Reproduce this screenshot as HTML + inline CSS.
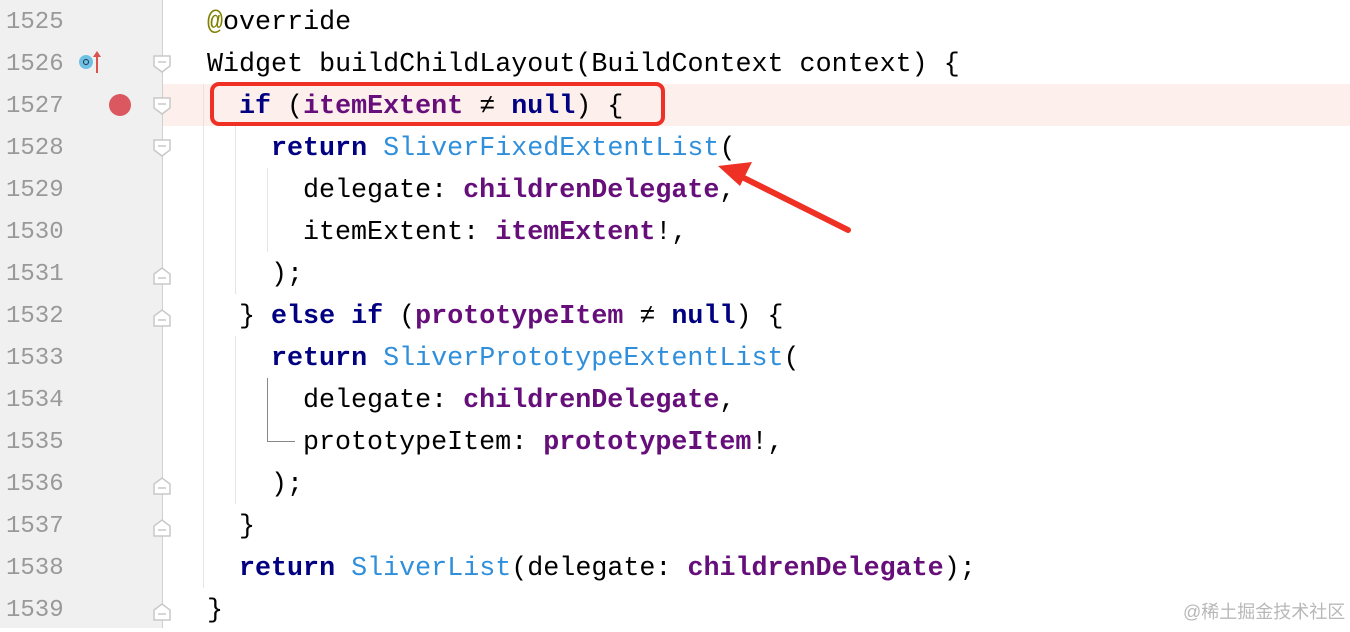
<!DOCTYPE html><html><head><style>
body{margin:0;width:1350px;height:628px;overflow:hidden;background:#fff;position:relative;font-family:"Liberation Mono",monospace}
.g{position:absolute;left:0;top:0;width:162px;height:628px;background:#f0f0f0}
.gl{position:absolute;left:162px;top:0;width:1px;height:628px;background:#d0d0d0}
.hl{position:absolute;left:163px;top:84px;width:1187px;height:42px;background:#fcefec}
.ln{position:absolute;left:6px;font-size:24px;color:#999;line-height:42px;margin-top:2px}
.c{position:absolute;font-size:26.7px;line-height:42px;white-space:pre;color:#000;margin-top:2px}
.k{color:#000080;font-weight:bold}.t{color:#2f8fdb}.f{color:#660e7a;font-weight:bold}.a{color:#808000}
.ig{position:absolute;width:1px;background:#e4e4e4}
</style></head><body>
<div class="g"></div><div class="gl"></div><div class="hl"></div>
<div class="ig" style="left:203px;top:84px;height:504px"></div>
<div class="ig" style="left:235px;top:126px;height:168px"></div>
<div class="ig" style="left:235px;top:336px;height:168px"></div>
<div class="ig" style="left:267px;top:168px;height:84px"></div>
<div style="position:absolute;left:267px;top:378px;width:1px;height:63px;background:#888"></div>
<div style="position:absolute;left:267px;top:441px;width:28px;height:1px;background:#888"></div>
<div class="ln" style="top:0">1525</div><div class="ln" style="top:42px">1526</div><div class="ln" style="top:84px">1527</div><div class="ln" style="top:126px">1528</div><div class="ln" style="top:168px">1529</div><div class="ln" style="top:210px">1530</div><div class="ln" style="top:252px">1531</div><div class="ln" style="top:294px">1532</div><div class="ln" style="top:336px">1533</div><div class="ln" style="top:378px">1534</div><div class="ln" style="top:420px">1535</div><div class="ln" style="top:462px">1536</div><div class="ln" style="top:504px">1537</div><div class="ln" style="top:546px">1538</div><div class="ln" style="top:588px">1539</div>
<div style="position:absolute;left:79px;top:55px;width:14px;height:14px;border-radius:50%;background:#6ec1e4"></div>
<div style="position:absolute;left:83px;top:59px;width:4px;height:4px;border-radius:50%;border:1.5px solid #234"></div>
<div style="position:absolute;left:96px;top:53px;width:2px;height:20px;background:#d9534f"></div>
<div style="position:absolute;left:93px;top:51px;width:0;height:0;border-left:4px solid transparent;border-right:4px solid transparent;border-bottom:6px solid #d9534f"></div>
<div style="position:absolute;left:109px;top:94px;width:22px;height:22px;border-radius:50%;background:#db5860"></div>
<svg style="position:absolute;left:0;top:0" width="1350" height="628">
<g fill="#fff" stroke="#c8c8c8" stroke-width="1.5">
<path d="M154 56h16v10l-8 6l-8-6z"/><path d="M154 98h16v10l-8 6l-8-6z"/><path d="M154 140h16v10l-8 6l-8-6z"/>
<path d="M154 284h16v-10l-8-6l-8 6z"/><path d="M154 326h16v-10l-8-6l-8 6z"/><path d="M154 494h16v-10l-8-6l-8 6z"/><path d="M154 536h16v-10l-8-6l-8 6z"/><path d="M154 620h16v-10l-8-6l-8 6z"/>
</g>
<g stroke="#c8c8c8" stroke-width="1.5"><path d="M158 62h8M158 104h8M158 146h8M158 278h8M158 320h8M158 488h8M158 530h8M158 614h8"/></g>
<rect x="212" y="84" width="451" height="40" rx="7" fill="none" stroke="#ee3124" stroke-width="4"/>
<path d="M848 230L740 176" stroke="#ee3124" stroke-width="6" stroke-linecap="round"/>
<path d="M718 166L752 162L740 186z" fill="#ee3124"/>
</svg>
<div class="c" style="left:207px;top:0"><span class="a">@</span>override</div>
<div class="c" style="left:207px;top:42px">Widget buildChildLayout(BuildContext context) {</div>
<div class="c" style="left:239px;top:84px"><span class="k">if</span> (<span class="f">itemExtent</span> ≠ <span class="k">null</span>) {</div>
<div class="c" style="left:271px;top:126px"><span class="k">return</span> <span class="t">SliverFixedExtentList</span>(</div>
<div class="c" style="left:303px;top:168px">delegate: <span class="f">childrenDelegate</span>,</div>
<div class="c" style="left:303px;top:210px">itemExtent: <span class="f">itemExtent</span>!,</div>
<div class="c" style="left:271px;top:252px">);</div>
<div class="c" style="left:239px;top:294px">} <span class="k">else if</span> (<span class="f">prototypeItem</span> ≠ <span class="k">null</span>) {</div>
<div class="c" style="left:271px;top:336px"><span class="k">return</span> <span class="t">SliverPrototypeExtentList</span>(</div>
<div class="c" style="left:303px;top:378px">delegate: <span class="f">childrenDelegate</span>,</div>
<div class="c" style="left:303px;top:420px">prototypeItem: <span class="f">prototypeItem</span>!,</div>
<div class="c" style="left:271px;top:462px">);</div>
<div class="c" style="left:239px;top:504px">}</div>
<div class="c" style="left:239px;top:546px"><span class="k">return</span> <span class="t">SliverList</span>(delegate: <span class="f">childrenDelegate</span>);</div>
<div class="c" style="left:207px;top:588px">}</div>
<div style="position:absolute;left:1183px;top:598px;font-family:'Liberation Sans','Noto Sans CJK SC',sans-serif;font-size:18px;color:#b8b8b8">@稀土掘金技术社区</div>
</body></html>
